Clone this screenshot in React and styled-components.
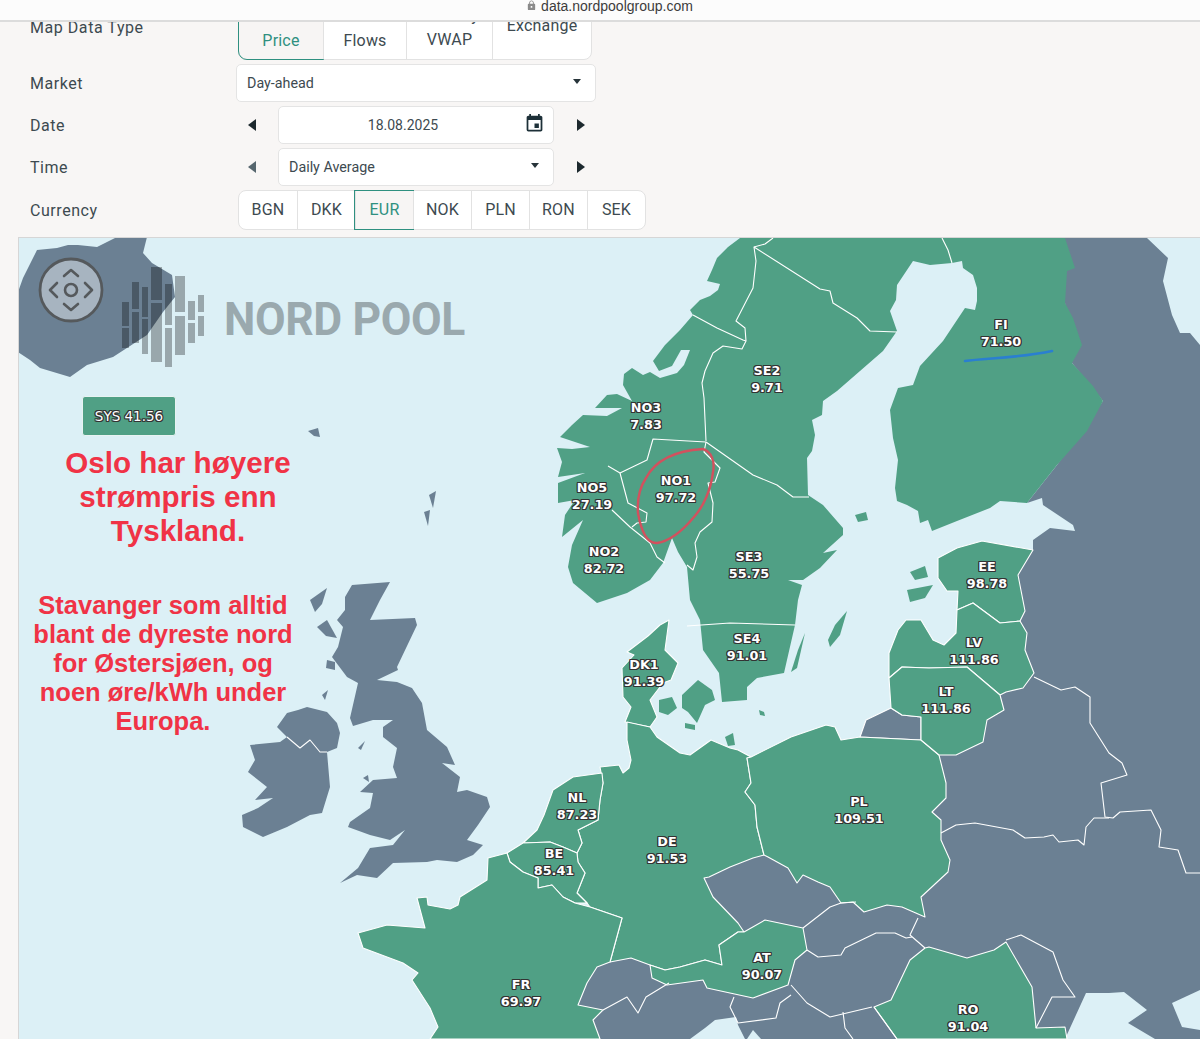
import React from "react";
import styled, { createGlobalStyle } from "styled-components";
import { MdEvent, MdLock } from "react-icons/md";

const GREEN = "#50a085";
const GREY = "#6b8093";
const SEA = "#dcf0f6";

const GlobalStyle = createGlobalStyle`
  html, body {
    margin: 0;
    height: 100%;
    overflow: hidden;
    background: #f8f6f5;
    font-family: Roboto, "Noto Sans", sans-serif;
  }
  * { box-sizing: border-box; }
`;

const scandinavia = `740,238 728,247 717,258 712,270 707,281 720,284 718,290 710,296 700,300 690,310 693,315 680,330 665,345 653,361 659,371 672,366 681,350 690,350 684,365 677,373 660,378 650,372 643,375 632,368 624,374 623,385 632,401 617,394 607,395 595,408 622,408 607,416 583,415 572,425 560,437 590,447 572,449 557,448 562,462 558,477 585,473 558,483 558,503 575,500 565,515 562,537
 583,520 572,545 568,567 573,583 597,603 627,593 650,580 663,563 672,538 678,552 687,567 690,600 700,620 703,650 719,673 722,702 747,700 747,687 757,678 784,673 795,625 798,600 802,585 788,580 803,580 820,568 837,550 823,553 843,535 843,528 823,505 808,495 807,458 812,451 815,435 812,420 822,415 823,401 837,391 860,371 883,351 897,331 890,311 896,300 897,285 913,261 930,265 952,263 962,261 963,268 973,275 977,288 977,301 975,310 965,308 943,341 920,366 913,385 898,388 890,410 893,438 898,460 895,488 897,501 907,505 918,511 920,523 928,520 932,531 957,521 990,508 1000,501 1027,503 1057,465 1087,431 1103,401 1093,386 1072,363 1082,345 1073,318 1065,303 1067,271 1075,268 1065,238`;

const russia = `1065,238 1147,238 1168,258 1163,281 1172,315 1180,333 1190,333 1200,345 1200,1039 570,1039 570,990 600,960 740,850 900,700 950,680 1000,640 990,570 1033,550 1033,540 1050,528 1075,531 1073,525 1043,505 1042,498 1027,503 1057,465 1103,401 1072,363 1065,303`;

const kaliningrad = "860,737 866,720 891,708 902,715 921,717 921,740";
const estonia = "938,558 957,548 982,541 1033,550 1018,575 1025,611 1020,621 1000,623 973,603 957,610 958,591 947,591 938,578";
const latvia = "889,678 889,653 898,630 906,620 921,620 933,640 944,645 956,633 957,610 973,603 1000,623 1020,621 1027,633 1025,650 1034,673 1023,688 1006,692 1000,695 967,667 929,668 902,667";
const lithuania = "889,678 902,667 929,668 967,667 1000,695 1004,710 987,720 983,742 956,755 939,755 921,740 921,717 902,715 891,708";
const poland = "751,757 791,737 826,725 835,727 841,740 860,737 921,740 939,755 946,783 946,798 932,812 941,820 941,840 950,860 948,872 921,897 925,917 902,907 887,905 864,912 853,902 841,903 830,887 818,882 803,875 797,883 788,868 768,857 764,855 757,827 755,805 745,792 751,783 747,758";
const germany = `600,767 619,765 623,773 629,768 631,760 627,740 627,722 650,727 657,737 680,753 690,755 711,740 730,748 738,750 751,757 747,758 751,783 745,792 755,805 757,827 764,855 753,858 730,867 709,877 704,878 713,897 738,923 744,932 738,932 719,945 722,965 705,960 680,967 665,970 650,965 631,958 610,962 622,918 590,907 587,903 577,893 585,873 578,862 577,853 582,843 578,830 598,820 600,800 603,783`;
const denmark = "669,620 660,625 648,636 627,652 634,655 622,668 623,697 631,707 625,722 650,727 657,717 650,700 663,683 671,680 678,663 665,650";
const netherlands = "537,830 544,815 553,790 573,777 602,773 603,783 600,800 598,820 578,830 582,843 577,853 563,847 550,842 523,843";
const belgium = "507,853 523,843 550,842 563,847 577,853 578,862 585,873 577,893 587,903 575,903 563,897 552,885 538,888 538,878 523,872 510,862";
const france = `507,853 488,858 487,880 460,897 458,905 450,909 428,905 427,897 417,898 425,928 387,925 358,933 363,948 403,963 418,973 412,980 430,1008 438,1027 430,1039 600,1039 593,1020 603,1010 578,1005 587,983 597,967 610,962 622,918 590,907 575,903 563,897 552,885 538,888 538,878 523,872 510,862`;
const austria = "738,932 719,945 722,965 705,960 680,967 665,970 650,965 652,978 667,985 703,980 707,988 753,998 788,985 795,960 807,950 803,928 765,920 744,932";
const romania = "925,948 929,947 967,958 994,950 1006,942 1032,987 1036,1028 1065,1027 1067,1039 897,1039 874,1007 891,1000 910,960";
const britain = `352,585 390,582 380,600 370,620 415,618 417,625 397,667 398,670 377,680 397,682 412,688 422,703 427,730 447,747 455,765 442,763 460,777 457,792 467,790 487,797 490,807 478,825 467,840 483,845 473,855 457,862 437,860 427,862 393,863 377,878 357,875 340,883 358,868 370,848 393,845 405,830 390,840 370,835 348,827 350,822 370,808 373,793 360,792 373,780 397,778 393,767 397,748 383,737 383,727 393,720 373,720 353,726 350,718 358,683 347,677 332,657 338,647 343,627 337,620 345,610 345,597`;
const ireland = "250,745 280,742 287,737 277,727 287,713 298,710 307,707 327,712 337,723 340,733 337,748 327,752 330,787 322,813 310,815 287,827 263,837 243,827 242,815 258,808 273,798 255,800 267,787 248,772 255,760";
const iceland = "18,352 18,292 23,278 37,250 57,248 68,245 78,245 97,247 107,242 117,237 147,237 143,253 152,263 172,275 175,297 163,312 147,335 113,357 87,365 70,377 40,368 30,360";

const greyIslands = [
  "310,600 327,588 322,604 315,612", "317,627 327,620 337,638 326,636", "327,660 335,662 335,670 326,668",
  "358,748 365,741 361,750", "363,778 368,775 369,782", "308,431 318,428 320,437 314,436",
  "429,495 436,491 433,508", "424,512 430,510 428,526", "322,695 328,690 325,700",
];
const greenIslands = [
  "659,700 672,697 677,708 668,715 659,712", "682,695 698,680 712,690 715,700 705,705 697,723 688,712 682,708",
  "907,590 933,585 925,598 910,602", "910,572 925,566 928,577 915,580", "828,640 835,625 847,611 840,635 830,647",
  "791,672 798,650 805,633 797,668", "759,710 764,712 765,716 760,715", "725,737 733,733 735,745 728,746",
  "855,515 866,512 868,520 858,522", "685,723 695,725 695,730 685,728",
];
const seaPatches = [
  "1065,1039 1086,993 1109,993 1124,992 1147,1010 1128,1023 1155,1039",
  "1172,1003 1200,990 1200,1030 1182,1027",
  "690,1039 705,1028 715,1020 736,1017 738,1025 745,1039",
  "747,1039 753,1030 761,1039",
];
const borders = [
  "773,238 765,244 754,247 756,261 753,288 736,321 745,328 746,341 742,349 723,346 713,353 705,371 702,383 704,398 706,441",
  "754,247 820,289 830,291 833,303 857,318 870,331 897,332",
  "693,315 717,328 743,340 746,341",
  "942,238 948,250 952,263",
  "706,442 653,439 647,460 620,473 608,466",
  "620,473 628,503 647,513 646,522 637,523 632,527",
  "612,510 630,527 650,543 657,557 665,563",
  "706,442 704,452 720,468 715,482 708,483 713,503 712,522 700,532 695,543 697,557 693,570 687,565",
  "706,442 753,475 777,485 793,497 809,497",
  "687,626 730,623 795,625",
  "1034,677 1061,690 1075,687 1090,697 1090,723 1109,753 1122,763 1127,775 1101,783 1105,817 1113,818 1120,812 1151,810 1161,830 1159,847 1178,850 1186,873 1200,873",
  "941,833 956,825 975,823 1013,830 1025,838 1044,837 1053,835 1059,842 1078,840 1084,845 1086,827 1094,818 1109,818",
  "807,950 818,957 841,955 845,948 876,933 895,933 906,938 912,937",
  "918,918 910,935 925,948",
  "1006,940 1021,935 1053,952 1063,980 1075,997 1052,997 1036,1028",
  "791,985 807,1003 830,1017 872,1007",
  "843,1012 845,1028 853,1039",
  "874,1007 897,1039",
  "734,997 730,1007 738,1023 776,1018 780,1003 791,995",
  "603,1010 627,997 638,1013 646,997 669,983",
  "803,928 830,907 841,903 856,902",
  "287,737 300,748 310,740 320,752 327,752",
];
const labels = [
  ["FI", "71.50", 1001, 325], ["SE2", "9.71", 767, 371], ["NO3", "7.83", 646, 408], ["NO1", "97.72", 676, 481],
  ["NO5", "27.19", 592, 488], ["NO2", "82.72", 604, 552], ["SE3", "55.75", 749, 557], ["EE", "98.78", 987, 567],
  ["SE4", "91.01", 747, 639], ["LV", "111.86", 974, 643], ["DK1", "91.39", 644, 665], ["LT", "111.86", 946, 692],
  ["NL", "87.23", 577, 798], ["PL", "109.51", 859, 802], ["DE", "91.53", 667, 842], ["BE", "85.41", 554, 854],
  ["AT", "90.07", 762, 958], ["FR", "69.97", 521, 985], ["RO", "91.04", 968, 1010],
];
const logoBars = [
  [122, 302, 7, 24], [122, 328, 7, 20], [132, 282, 7, 27], [132, 312, 7, 31], [142, 287, 6, 30], [142, 319, 6, 35],
  [151, 267, 11, 33], [151, 303, 11, 59], [165, 284, 7, 41], [165, 328, 7, 39], [175, 276, 10, 36], [175, 316, 10, 39],
  [188, 301, 7, 19], [188, 323, 7, 20], [198, 295, 6, 17], [198, 316, 6, 20],
];

const Page = styled.div`
  height: 1039px;
  overflow: hidden;
  display: flex;
  flex-direction: column;
`;
const AddressBar = styled.div`
  position: relative;
  z-index: 2;
  flex: none;
  height: 22px;
  background: #fcfcfc;
  border-bottom: 2px solid #dcdcdc;
  display: flex;
  justify-content: center;
  align-items: flex-start;
  gap: 4px;
  font-family: "Liberation Sans", Arial, sans-serif;
  font-size: 14px;
  line-height: 12px;
  color: #3c3c3c;
  padding-left: 19px;
  svg { color: #8a8a8a; }
`;
const Scroller = styled.div`
  flex: 1;
  min-height: 0;
  overflow: hidden;
`;
const Form = styled.div`
  margin-top: -14px;
  padding-left: 30px;
  display: flex;
  flex-direction: column;
  color: #3d4a50;
`;
const FormRow = styled.div`
  display: grid;
  grid-template-columns: 206px auto;
  justify-content: start;
  align-items: center;
  height: ${(p) => p.$height}px;
  margin-bottom: ${(p) => p.$gap ?? 4}px;
`;
const FieldLabel = styled.div`
  font-size: 16px;
  letter-spacing: 0.55px;
  margin-top: ${(p) => p.$shift ?? 0}px;
`;
const Segments = styled.div`
  display: flex;
  margin-left: 2px;
  background: #fff;
  border: 1px solid #e2e2e2;
  border-radius: 8px;
  height: ${(p) => p.$height}px;
  width: max-content;
`;
const Segment = styled.div`
  width: ${(p) => p.$width}px;
  border-left: 1px solid #e2e2e2;
  display: flex;
  flex-direction: column;
  align-items: center;
  justify-content: ${(p) => (p.$bottomAligned ? "flex-end" : "center")};
  font-size: 16px;
  line-height: 24px;
  letter-spacing: 0.2px;
  padding-top: ${(p) => p.$pad ?? 0}px;
  padding-bottom: ${(p) => p.$lift ?? 0}px;
  color: #3d4a50;
  white-space: nowrap;
  &:first-child { border-left: 0; border-radius: 8px 0 0 8px; }
  &:last-child { border-radius: 0 8px 8px 0; }
  ${(p) => p.$active && `
    color: #2f9080;
    background: #f7f5f4;
    outline: 1px solid #2f9080;
  `}
`;
const Select = styled.div`
  width: ${(p) => p.$width}px;
  height: 38px;
  background: #fff;
  border: 1px solid #e4e4e4;
  border-radius: 5px;
  display: flex;
  align-items: center;
  justify-content: ${(p) => (p.$centered ? "center" : "space-between")};
  padding: ${(p) => (p.$centered ? "0 26px 0 0" : "0 14px 0 10px")};
  position: relative;
  font-size: ${(p) => (p.$centered ? 14 : 14.3)}px;
  color: #3d4a50;
`;
const Caret = styled.span`
  width: 0;
  height: 0;
  margin-top: -3px;
  border-left: 4.5px solid transparent;
  border-right: 4.5px solid transparent;
  border-top: 5px solid #27343a;
`;
const Stepper = styled.div`
  display: flex;
  align-items: center;
`;
const StepButton = styled.span`
  width: 42px;
  height: 12px;
  display: flex;
  justify-content: flex-start;
  padding-left: ${(p) => (p.$right ? 23 : 12)}px;
  &::before {
    content: "";
    border-top: 6px solid transparent;
    border-bottom: 6px solid transparent;
    ${(p) => (p.$right ? "border-left" : "border-right")}: 8px solid ${(p) => (p.$muted ? "#56666e" : "#1d292e")};
  }
`;
const CalendarIcon = styled(MdEvent)`
  position: absolute;
  right: 8px;
  top: 6px;
  color: #1d3038;
`;
const MapBox = styled.div`
  position: relative;
  margin: 2px 0 0 18px;
  height: 802px;
  overflow: hidden;
  background: ${SEA};
  border: 1px solid #d6d6d6;
  border-width: 1px 0 0 1px;
`;
const MapSvg = styled.svg`
  display: block;
  width: 1181px;
  height: 801px;
`;
const LogoText = styled.div`
  position: absolute;
  left: 205px;
  top: 53px;
  font-size: 47px;
  line-height: 56px;
  font-weight: 700;
  color: #9aa9ae;
  white-space: nowrap;
  letter-spacing: -0.4px;
  transform: scaleX(0.945);
  transform-origin: left center;
`;
const SysBadge = styled.div`
  position: absolute;
  left: 63px;
  top: 158px;
  width: 94px;
  height: 40px;
  border: 1px solid #e8f3f2;
  border-radius: 3px;
  background: ${GREEN};
  display: flex;
  align-items: center;
  justify-content: center;
`;
const outlined = `
  font-family: "DejaVu Sans", sans-serif;
  color: #fff;
  text-shadow: -1px 0 #333, 1px 0 #333, 0 -1px #333, 0 1px #333, 1px 1px #333, -1px -1px #333, 1px -1px #333, -1px 1px #333;
`;
const SysText = styled.span`
  ${outlined}
  font-size: 13.5px;
`;
const ZoneLabel = styled.div`
  ${outlined}
  font-weight: 700;
  position: absolute;
  left: ${(p) => p.$x - 19}px;
  top: ${(p) => p.$y - 247}px;
  transform: translateX(-50%);
  font-size: 12.8px;
  line-height: 17px;
  text-align: center;
  white-space: nowrap;
`;
const Note = styled.div`
  position: absolute;
  left: ${(p) => p.$center - 19 - 160}px;
  top: ${(p) => p.$top}px;
  width: 320px;
  text-align: center;
  font-family: "Liberation Sans", Arial, sans-serif;
  font-weight: 700;
  color: #f03346;
  font-size: ${(p) => p.$size}px;
  line-height: ${(p) => p.$leading}px;
`;

const NavControl = () => (
  <g fill="none" stroke="#55595c" strokeWidth="2.6" strokeLinecap="round" strokeLinejoin="round">
    <circle cx="71" cy="290" r="31" fill="#a7b4c0" strokeWidth="2.8" />
    <circle cx="71" cy="290" r="6" />
    <path d="M64 276l7-6 7 6M64 304l7 6 7-6M57 283l-7 7 7 7M85 283l7 7-7 7" />
  </g>
);

const App = () => (
  <Page>
    <GlobalStyle />
    <AddressBar>
      <MdLock size={11} />
      <span>data.nordpoolgroup.com</span>
    </AddressBar>
    <Scroller>
      <Form>
        <FormRow $height={52}>
          <FieldLabel $shift={-14}>Map Data Type</FieldLabel>
          <Segments $height={52}>
            <Segment $width={84} $active $pad={14}>Price</Segment>
            <Segment $width={83} $pad={14}>Flows</Segment>
            <Segment $width={86} $bottomAligned $lift={7}>
              <span>Intraday</span>
              <span>VWAP</span>
            </Segment>
            <Segment $width={99} $bottomAligned $lift={21}>
              <span>Net</span>
              <span>Exchange</span>
            </Segment>
          </Segments>
        </FormRow>
        <FormRow $height={38}>
          <FieldLabel>Market</FieldLabel>
          <Select $width={360}>
            Day-ahead
            <Caret />
          </Select>
        </FormRow>
        <FormRow $height={38}>
          <FieldLabel>Date</FieldLabel>
          <Stepper>
            <StepButton />
            <Select $width={276} $centered>
              18.08.2025
              <CalendarIcon size={21} />
            </Select>
            <StepButton $right />
          </Stepper>
        </FormRow>
        <FormRow $height={38}>
          <FieldLabel>Time</FieldLabel>
          <Stepper>
            <StepButton $muted />
            <Select $width={276}>
              Daily Average
              <Caret />
            </Select>
            <StepButton $right />
          </Stepper>
        </FormRow>
        <FormRow $height={40} $gap={5}>
          <FieldLabel>Currency</FieldLabel>
          <Segments $height={40}>
            {["BGN", "DKK", "EUR", "NOK", "PLN", "RON", "SEK"].map((code) => (
              <Segment key={code} $width={58} $active={code === "EUR"}>{code}</Segment>
            ))}
          </Segments>
        </FormRow>
      </Form>
      <MapBox>
        <MapSvg viewBox="19 238 1181 801">
          <g stroke="#fff" strokeWidth="1.1" strokeLinejoin="round">
            <polygon points={russia} fill={GREY} stroke="none" />
            <polygon points={kaliningrad} fill={GREY} />
            <polygon points={iceland} fill={GREY} stroke="none" />
            <polygon points={britain} fill={GREY} stroke="none" />
            <polygon points={ireland} fill={GREY} stroke="none" />
            {greyIslands.map((pts) => <polygon key={pts} points={pts} fill={GREY} stroke="none" />)}
            {seaPatches.map((pts) => <polygon key={pts} points={pts} fill={SEA} stroke="none" />)}
            <polygon points={scandinavia} fill={GREEN} stroke="none" />
            {[denmark, germany, poland, estonia, latvia, lithuania, netherlands, belgium, france, austria, romania].map((pts) => (
              <polygon key={pts} points={pts} fill={GREEN} />
            ))}
            {greenIslands.map((pts) => <polygon key={pts} points={pts} fill={GREEN} stroke="none" />)}
            {borders.map((pts) => <polyline key={pts} points={pts} fill="none" />)}
          </g>
          <path
            d="M703 449C712 452 715 462 713 472C711 490 703 507 694 517C684 529 671 541 657 543C646 544 641 530 638 513C637 500 640 487 646 478C654 463 670 451 703 449Z"
            fill="none"
            stroke="#d2515e"
            strokeWidth="2.4"
          />
          <path d="M965 361C985 358 1020 358 1052 351" fill="none" stroke="#2a7fd0" strokeWidth="2.6" strokeLinecap="round" />
          <g fill="#000" fillOpacity="0.3">
            {logoBars.map(([x, y, w, h]) => <rect key={`${x}-${y}`} x={x} y={y} width={w} height={h} />)}
          </g>
          <NavControl />
        </MapSvg>
        <LogoText>NORD POOL</LogoText>
        <SysBadge><SysText>SYS 41.56</SysText></SysBadge>
        {labels.map(([zone, price, x, y]) => (
          <ZoneLabel key={zone} $x={x} $y={y}>{zone}<br />{price}</ZoneLabel>
        ))}
        <Note $center={178} $top={208} $size={29.6} $leading={34}>
          Oslo har høyere<br />strømpris enn<br />Tyskland.
        </Note>
        <Note $center={163} $top={353} $size={25.5} $leading={29}>
          Stavanger som alltid<br />blant de dyreste nord<br />for Østersjøen, og<br />noen øre/kWh under<br />Europa.
        </Note>
      </MapBox>
    </Scroller>
  </Page>
);

export default App;
